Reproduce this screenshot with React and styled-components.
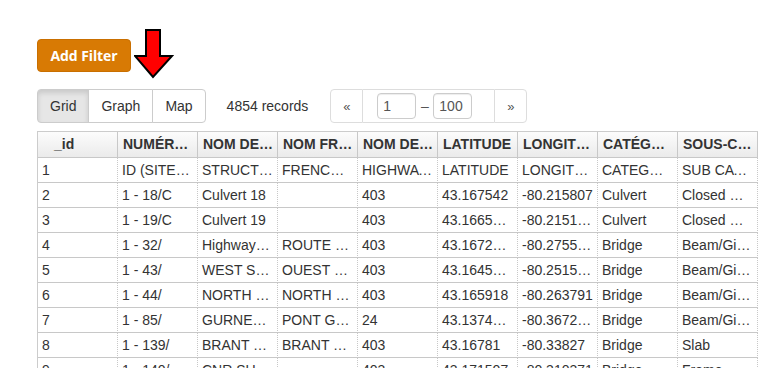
import React from 'react';
import styled, { createGlobalStyle } from 'styled-components';

const GlobalStyle = createGlobalStyle`
  html, body {
    margin: 0;
    padding: 0;
    background: #fff;
  }
  body {
    font-family: "Liberation Sans", Arial, sans-serif;
    font-size: 14px;
    color: #333;
  }
`;

const Page = styled.div`
  padding: 39px 0 0 37px;
  width: 721px;
  overflow: hidden;
  height: 329px;
`;

const FilterBar = styled.div`
  display: flex;
  align-items: flex-start;
  height: 50px;
`;

const AddFilter = styled.button`
  width: 94px;
  height: 33px;
  padding: 0;
  background: #d87a04;
  border: 1px solid #c96f00;
  border-radius: 4px;
  color: #fff;
  font-family: "Open Sans", sans-serif;
  font-weight: 700;
  font-size: 14px;
  letter-spacing: -0.1px;
  cursor: pointer;
`;

const Arrow = styled.svg`
  margin: -10px 0 0 3px;
`;

const Toolbar = styled.div`
  display: flex;
  align-items: center;
  height: 34px;
  margin-bottom: 8px;
`;

const Group = styled.div`
  display: flex;
  height: 34px;
`;

const GroupButton = styled.button`
  height: 34px;
  padding: 0 12px;
  font-family: "Liberation Sans", Arial, sans-serif;
  font-size: 14px;
  color: #333;
  background: ${(p) => (p.$active ? '#e6e6e6' : '#fff')};
  box-shadow: ${(p) => (p.$active ? 'inset 0 3px 5px rgba(0,0,0,.125)' : 'none')};
  border: 1px solid #ccc;
  margin-left: -1px;
  &:first-child {
    margin-left: 0;
    border-radius: 4px 0 0 4px;
  }
  &:last-child {
    border-radius: 0 4px 4px 0;
  }
`;

const Records = styled.span`
  margin: 0 22px 0 21px;
  color: #333;
`;

const Pager = styled.div`
  display: flex;
  height: 34px;
`;

const PagerButton = styled.button`
  width: 33px;
  height: 34px;
  background: #fff;
  border: 1px solid #ddd;
  color: #555;
  font-size: 13px;
  padding: 0;
  border-radius: ${(p) => (p.$side === 'left' ? '4px 0 0 4px' : '0 4px 4px 0')};
`;

const RangeBox = styled.div`
  display: flex;
  align-items: center;
  width: 117px;
  height: 32px;
  border-top: 1px solid #ddd;
  border-bottom: 1px solid #ddd;
  padding: 0 0 0 14px;
`;

const RangeInput = styled.input`
  width: 39px;
  height: 26px;
  box-sizing: border-box;
  border: 1px solid #ccc;
  border-radius: 4px;
  padding: 0 5px;
  font-family: "Liberation Sans", Arial, sans-serif;
  font-size: 14px;
  color: #555;
  box-shadow: inset 0 1px 1px rgba(0,0,0,.075);
`;

const Dash = styled.span`
  width: 17px;
  text-align: center;
  color: #555;
`;

const Grid = styled.div`
  border-left: 1px solid #ccc;
  border-top: 1px solid #ccc;
  width: 720px;
`;

const Row = styled.div`
  display: grid;
  grid-template-columns: repeat(9, 80px);
  height: ${(p) => (p.$head ? 26 : 25)}px;
  background: ${(p) => (p.$head ? 'linear-gradient(#fcfcfc, #eaeaea)' : '#fff')};
`;

const Cell = styled.div`
  box-sizing: border-box;
  padding: 0 3px 0 ${(p) => p.$indent || 4}px;
  border-right: 1px ${(p) => (p.$head ? 'solid' : 'dotted')} #c8c8c8;
  border-bottom: 1px solid #c8c8c8;
  line-height: ${(p) => (p.$head ? 25 : 24)}px;
  font-weight: ${(p) => (p.$head ? 700 : 400)};
  white-space: nowrap;
  overflow: hidden;
  text-overflow: ellipsis;
  color: #333;
`;

const columns = ['_id', 'NUMÉRO DE SITE', 'NOM DE LA STRUCTURE', 'NOM FRANÇAIS', 'NOM DE LA ROUTE', 'LATITUDE', 'LONGITUDE', 'CATÉGORIE', 'SOUS-CATÉGORIE'];

const rows = [
  ['1', 'ID (SITE_NO)', 'STRUCTURE', 'FRENCH NAME', 'HIGHWAY NAME', 'LATITUDE', 'LONGITUDE', 'CATEGORY', 'SUB CATEGORY'],
  ['2', '1 - 18/C', 'Culvert 18', '', '403', '43.167542', '-80.215807', 'Culvert', 'Closed Metal'],
  ['3', '1 - 19/C', 'Culvert 19', '', '403', '43.16650123', '-80.21510234', 'Culvert', 'Closed Metal'],
  ['4', '1 - 32/', 'Highway403 Bridge', 'ROUTE 403', '403', '43.16728043', '-80.27550134', 'Bridge', 'Beam/Girder'],
  ['5', '1 - 43/', 'WEST STREET', 'OUEST RUE', '403', '43.16450134', '-80.25150212', 'Bridge', 'Beam/Girder'],
  ['6', '1 - 44/', 'NORTH PARK', 'NORTH PARK', '403', '43.165918', '-80.263791', 'Bridge', 'Beam/Girder'],
  ['7', '1 - 85/', 'GURNEY BRIDGE', 'PONT GURNEY', '24', '43.13740123', '-80.36720145', 'Bridge', 'Beam/Girder'],
  ['8', '1 - 139/', 'BRANT ROAD', 'BRANT ROAD', '403', '43.16781', '-80.33827', 'Bridge', 'Slab'],
  ['9', '1 - 140/', 'CNR SUBWAY', '', '403', '43.171507', '-80.310371', 'Bridge', 'Frame'],
];

export default function App() {
  return (
    <>
      <GlobalStyle />
      <Page>
        <FilterBar>
          <AddFilter type="button">Add Filter</AddFilter>
          <Arrow width="40" height="50" viewBox="0 0 40 50">
            <path d="M12 1 H26 V27 H38 L19 48 L1 27 H12 Z" fill="#f00" stroke="#000" strokeWidth="2" strokeLinejoin="miter" />
          </Arrow>
        </FilterBar>
        <Toolbar>
          <Group>
            <GroupButton $active>Grid</GroupButton>
            <GroupButton>Graph</GroupButton>
            <GroupButton>Map</GroupButton>
          </Group>
          <Records>4854 records</Records>
          <Pager>
            <PagerButton $side="left">«</PagerButton>
            <RangeBox>
              <RangeInput defaultValue="1" />
              <Dash>–</Dash>
              <RangeInput defaultValue="100" />
            </RangeBox>
            <PagerButton $side="right">»</PagerButton>
          </Pager>
        </Toolbar>
        <Grid>
          <Row $head>
            {columns.map((c, i) => (
              <Cell key={c} $head $indent={i === 0 ? 16 : 5}>{c}</Cell>
            ))}
          </Row>
          {rows.map((r) => (
            <Row key={r[0]}>
              {r.map((v, i) => (
                <Cell key={i}>{v}</Cell>
              ))}
            </Row>
          ))}
        </Grid>
      </Page>
    </>
  );
}
